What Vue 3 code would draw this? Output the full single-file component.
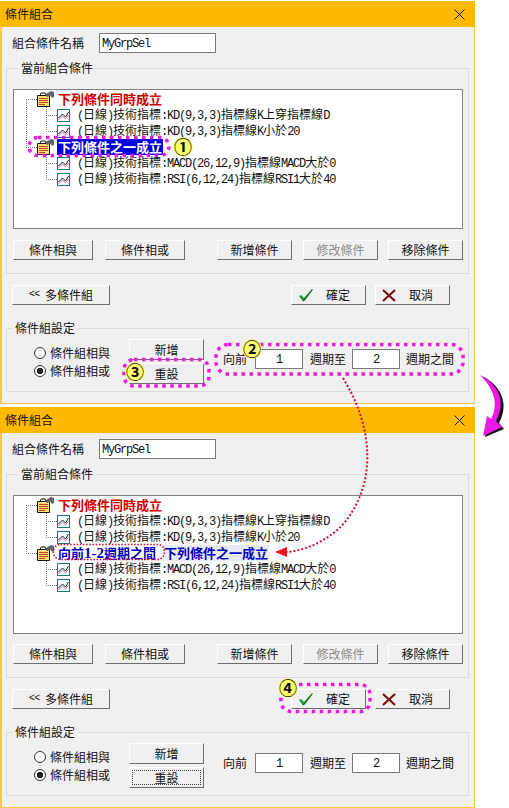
<template>
  <div class="page">
    <section
      v-for="win in windows"
      :key="win.id"
      class="window"
      :class="{ second: win.id === 2 }"
    >
      <header class="title">
        <span>條件組合</span>
        <svg class="close" width="11" height="11" viewBox="0 0 11 11">
          <path d="M.5.5l10 10M10.5.5l-10 10" stroke="#111" fill="none" />
        </svg>
      </header>

      <div class="body">
        <div class="name-row">
          <label class="name-label">組合條件名稱</label>
          <div class="field name-field"><span class="latin">MyGrpSel</span></div>
        </div>

        <fieldset class="group">
          <legend>當前組合條件</legend>
          <div class="tree">
            <svg class="tree-lines" width="60" height="100">
              <path
                d="M12.5 9v48M12 9.500h11M12 57.500h11M32.500 17v24M32 25.500h11M32 41.500h11M32.500 65v24M32 73.500h11M32 89.500h11"
                stroke="#777"
                stroke-dasharray="1 1"
                fill="none"
              />
            </svg>
            <template v-for="(node, n) in win.tree" :key="n">
              <div class="row parent">
                <svg class="folder" width="17" height="16" viewBox="0 0 17 16">
                  <path d="M.5 4.500h12v11H.5z" fill="#ffdf70" stroke="#111" />
                  <path d="M2 7.500h9M2 9.500h9M2 11.500h9M2 13.500h6" stroke="#c2402a" />
                  <path d="M3 4.500l1-2.500h4l1 2.500z" fill="#fff" stroke="#111" />
                  <path d="M8 3.500L14 0l3 1v5l-2 1-1.500-2.500L10 6z" fill="#5c6068" />
                </svg>
                <span v-if="node.prefix" class="prefix">
                  <span>向前</span><span class="prefix-num">1-2</span><span>週期之間</span>
                </span>
                <span class="node-label" :class="node.kind">{{ node.label }}</span>
              </div>
              <div v-for="item in node.items" :key="item" class="row child">
                <svg class="chart" width="13" height="13" viewBox="0 0 13 13">
                  <rect x=".5" y=".5" width="12" height="12" fill="#fff" stroke="#1c7480" />
                  <path d="M1.500 11l4-4 3 3 3-4" stroke="#d86aa8" fill="none" />
                  <path d="M1.500 9l4-4 3 3 3-5" stroke="#1a1a1a" fill="none" />
                </svg>
                <span class="item-text">
                  <span
                    v-for="(part, p) in splitText(item)"
                    :key="p"
                    :class="{ latin: part.latin }"
                  >{{ part.text }}</span>
                </span>
              </div>
            </template>
          </div>
          <div class="tree-buttons">
            <button class="btn w80">條件相與</button>
            <button class="btn w80 ml12">條件相或</button>
            <button class="btn w75 ml32">新增條件</button>
            <button class="btn w75 ml11 disabled">修改條件</button>
            <button class="btn w75 ml10">移除條件</button>
          </div>
        </fieldset>

        <div class="action-row">
          <button class="btn more"><span class="latin small">&lt;&lt; </span>多條件組</button>
          <button class="btn w75 ok">
            <svg width="16" height="14" viewBox="0 0 16 14">
              <path d="M1 8l2-1 3 3 8-9 1 .5-8 11-2 1z" fill="#1f9d2e" />
              <path d="M5 13l9-11" stroke="#0c5c18" fill="none" />
            </svg>
            <span>確定</span>
          </button>
          <button class="btn w75 cancel">
            <svg width="14" height="13" viewBox="0 0 14 13">
              <path d="M1 1l12 11M13 1L1 12" stroke="#7d1010" stroke-width="2.200" fill="none" />
            </svg>
            <span>取消</span>
          </button>
        </div>

        <fieldset class="group settings">
          <legend>條件組設定</legend>
          <div class="settings-row">
            <div class="radios">
              <label class="radio"><span class="dot"></span>條件組相與</label>
              <label class="radio"><span class="dot checked"></span>條件組相或</label>
            </div>
            <div class="stack">
              <button class="btn stack-btn">新增</button>
              <button class="btn stack-btn" :class="{ focused: win.id === 2 }">重設</button>
            </div>
            <div class="period">
              <span>向前</span>
              <div class="field num first"><span class="latin">1</span></div>
              <span class="m7">週期至</span>
              <div class="field num"><span class="latin">2</span></div>
              <span class="m6">週期之間</span>
            </div>
          </div>
        </fieldset>
      </div>
    </section>

    <!-- 標註層 -->
    <svg class="notes" width="509" height="808" viewBox="0 0 509 808">
      <g fill="none" stroke="#ee18e0" stroke-width="3.500" stroke-dasharray="3.500 4.500">
        <rect x="29" y="137.500" width="140" height="18" rx="9" />
        <rect x="216" y="344.500" width="247" height="29.500" rx="12" />
        <rect x="124" y="359.500" width="85" height="26.500" rx="10" />
        <rect x="281" y="684.500" width="89" height="27" rx="10" />
      </g>
      <rect x="53.500" y="544.500" width="111" height="15" rx="7" fill="none" stroke="#d01038" stroke-width="1.600" stroke-dasharray="1.600 1.600" />
      <path d="M343 378C372 425 378 480 345 522 330 540 305 551 286 552" fill="none" stroke="#d01038" stroke-width="2" stroke-dasharray="2 2" />
      <path d="M275 552l12-5v10z" fill="#f01020" />
      <path d="M482 376C500 385 510 402 499 423L504 429 485 437 489 418 493 421C502 403 494 388 482 376Z" fill="#111" />
      <path d="M480 375C498 384 507 401 496 421L502 427 483 436 487 416 491 419C500 402 492 387 480 375Z" fill="#f018e8" />
      <g v-for="mark in marks" :key="mark.text">
        <circle :cx="mark.x" :cy="mark.y" r="10" fill="#ffff70" />
        <text :x="mark.x" :y="mark.y + 6.500" text-anchor="middle" class="mark-text">{{ mark.text }}</text>
      </g>
    </svg>
  </div>
</template>

<script setup>
const items1 = [
  '(日線)技術指標:KD(9,3,3)指標線K上穿指標線D',
  '(日線)技術指標:KD(9,3,3)指標線K小於20',
]
const items2 = [
  '(日線)技術指標:MACD(26,12,9)指標線MACD大於0',
  '(日線)技術指標:RSI(6,12,24)指標線RSI1大於40',
]

const windows = [
  {
    id: 1,
    tree: [
      { label: '下列條件同時成立', kind: 'red', items: items1 },
      { label: '下列條件之一成立', kind: 'selected', items: items2 },
    ],
  },
  {
    id: 2,
    tree: [
      { label: '下列條件同時成立', kind: 'red', items: items1 },
      { label: '下列條件之一成立', kind: 'blue', prefix: true, items: items2 },
    ],
  },
]

const marks = [
  { text: '①', x: 183, y: 147 },
  { text: '②', x: 252, y: 349 },
  { text: '③', x: 135, y: 372 },
  { text: '④', x: 288, y: 688 },
]

// 半形字元用等寬字型
function splitText(str) {
  return str.match(/[\x20-\x7e]+|[^\x20-\x7e]+/g).map((text) => ({
    text,
    latin: /^[\x20-\x7e]/.test(text),
  }))
}
</script>

<style scoped>
.page { position: relative; width: 509px; height: 808px; overflow: hidden; padding-top: 1px; box-sizing: border-box; font-family: "Noto Sans CJK TC", sans-serif; font-size: 12px; line-height: 16px; color: #111; }
.window { width: 475px; box-sizing: border-box; background: #f0f0f0; border: 1px solid #f3c850; border-left-width: 2px; border-top: 0; margin-bottom: 3px; }
.second { margin-bottom: 0; }
.title { height: 26px; margin-left: -2px; margin-right: -1px; background: #ffb900; display: flex; align-items: center; justify-content: space-between; padding: 0 10px 0 5px; }
.close { display: block; }
.body { padding: 6px 5px 11px 4px; }

.name-row { display: flex; align-items: center; padding-left: 6px; }
.name-label { width: 87px; }
.field { box-sizing: border-box; height: 20px; border: 1px solid #7a7a7a; background: #fff; line-height: 15px; }
.name-field { width: 117px; padding-left: 2px; }
.latin { font-family: "Liberation Mono", monospace; font-size: 12px; letter-spacing: -1.2px; white-space: pre; }
.small { font-size: 10px; letter-spacing: -0.6px; }

.group { margin: 7px 0 0; padding: 13px 5px 13px 6px; border: 1px solid #dcdcdc; min-width: 0; width: 463px; box-sizing: border-box; }
.group legend { margin-left: 5px; padding: 0 3px; line-height: 16px; }

.tree { position: relative; box-sizing: border-box; width: 450px; height: 140px; padding-top: 1px; background: #fff; border: 1px solid #828282; }
.second .tree { height: 139px; }
.tree-lines { position: absolute; left: 0; top: 0; }
.row { position: relative; display: flex; align-items: center; height: 16px; white-space: nowrap; }
.parent { padding-left: 23px; font-size: 13px; font-weight: 700; }
.child { padding-left: 43px; }
.folder { flex: none; margin-right: 4px; }
.chart { flex: none; margin-right: 7px; }
.item-text { display: block; }
.node-label { display: inline-block; padding: 0 1px; margin-left: -1px; line-height: 16px; }
.red { color: #d00000; }
.selected { background: #0000e0; color: #fff; }
.blue { color: #0000c0; background: #e6eaf5; margin-left: 7px; }
.prefix { color: #0000c0; display: inline-flex; }
.prefix-num { font-family: "Liberation Serif", serif; font-size: 15px; }

.tree-buttons { display: flex; margin-top: 11px; }
.second .tree-buttons { margin-top: 10px; }
.btn { box-sizing: border-box; height: 20px; padding: 0; background: #f0f0f0; border: 1px solid; border-color: #fff #6e6e6e #6e6e6e #fff; font: inherit; color: #111; display: flex; align-items: center; justify-content: center; }
.w80 { width: 80px; }
.w75 { width: 75px; }
.ml10 { margin-left: 10px; }
.ml11 { margin-left: 11px; }
.ml12 { margin-left: 12px; }
.ml32 { margin-left: 32px; }
.disabled { color: #8c8c8c; }

.action-row { display: flex; margin-top: 11px; padding-left: 6px; }
.more { width: 98px; }
.ok { margin-left: 181px; justify-content: flex-start; padding-left: 6px; gap: 12px; }
.cancel { margin-left: 9px; justify-content: flex-start; padding-left: 6px; gap: 13px; }

.settings { margin-top: 15px; padding: 3px 5px 7px 0; }
.settings-row { display: flex; align-items: flex-start; }
.radios { margin: 5px 0 0 27px; width: 76px; }
.radio { display: flex; align-items: center; gap: 4px; height: 18px; }
.dot { box-sizing: border-box; width: 12px; height: 12px; flex: none; border: 1px solid #333; border-radius: 50%; background: #fff; }
.checked { background: radial-gradient(circle, #222 0 3px, #fff 3.500px); }
.stack { margin-left: 19px; width: 75px; display: flex; flex-direction: column; gap: 3px; }
.stack-btn { width: 75px; height: 21px; }
.focused { outline: 1px dotted #444; outline-offset: -4px; }
.period { display: flex; align-items: center; margin: 10px 0 0 19px; }
.num { width: 48px; text-align: center; }
.first { margin-left: 8px; }
.m7 { margin: 0 6px 0 7px; }
.m6 { margin-left: 6px; }

.notes { position: absolute; left: 0; top: 0; pointer-events: none; }
.mark-text { font-family: "Noto Sans CJK TC", sans-serif; font-size: 18px; font-weight: 700; fill: #111; }
</style>

<style>
html, body { background: #fff; }
</style>
